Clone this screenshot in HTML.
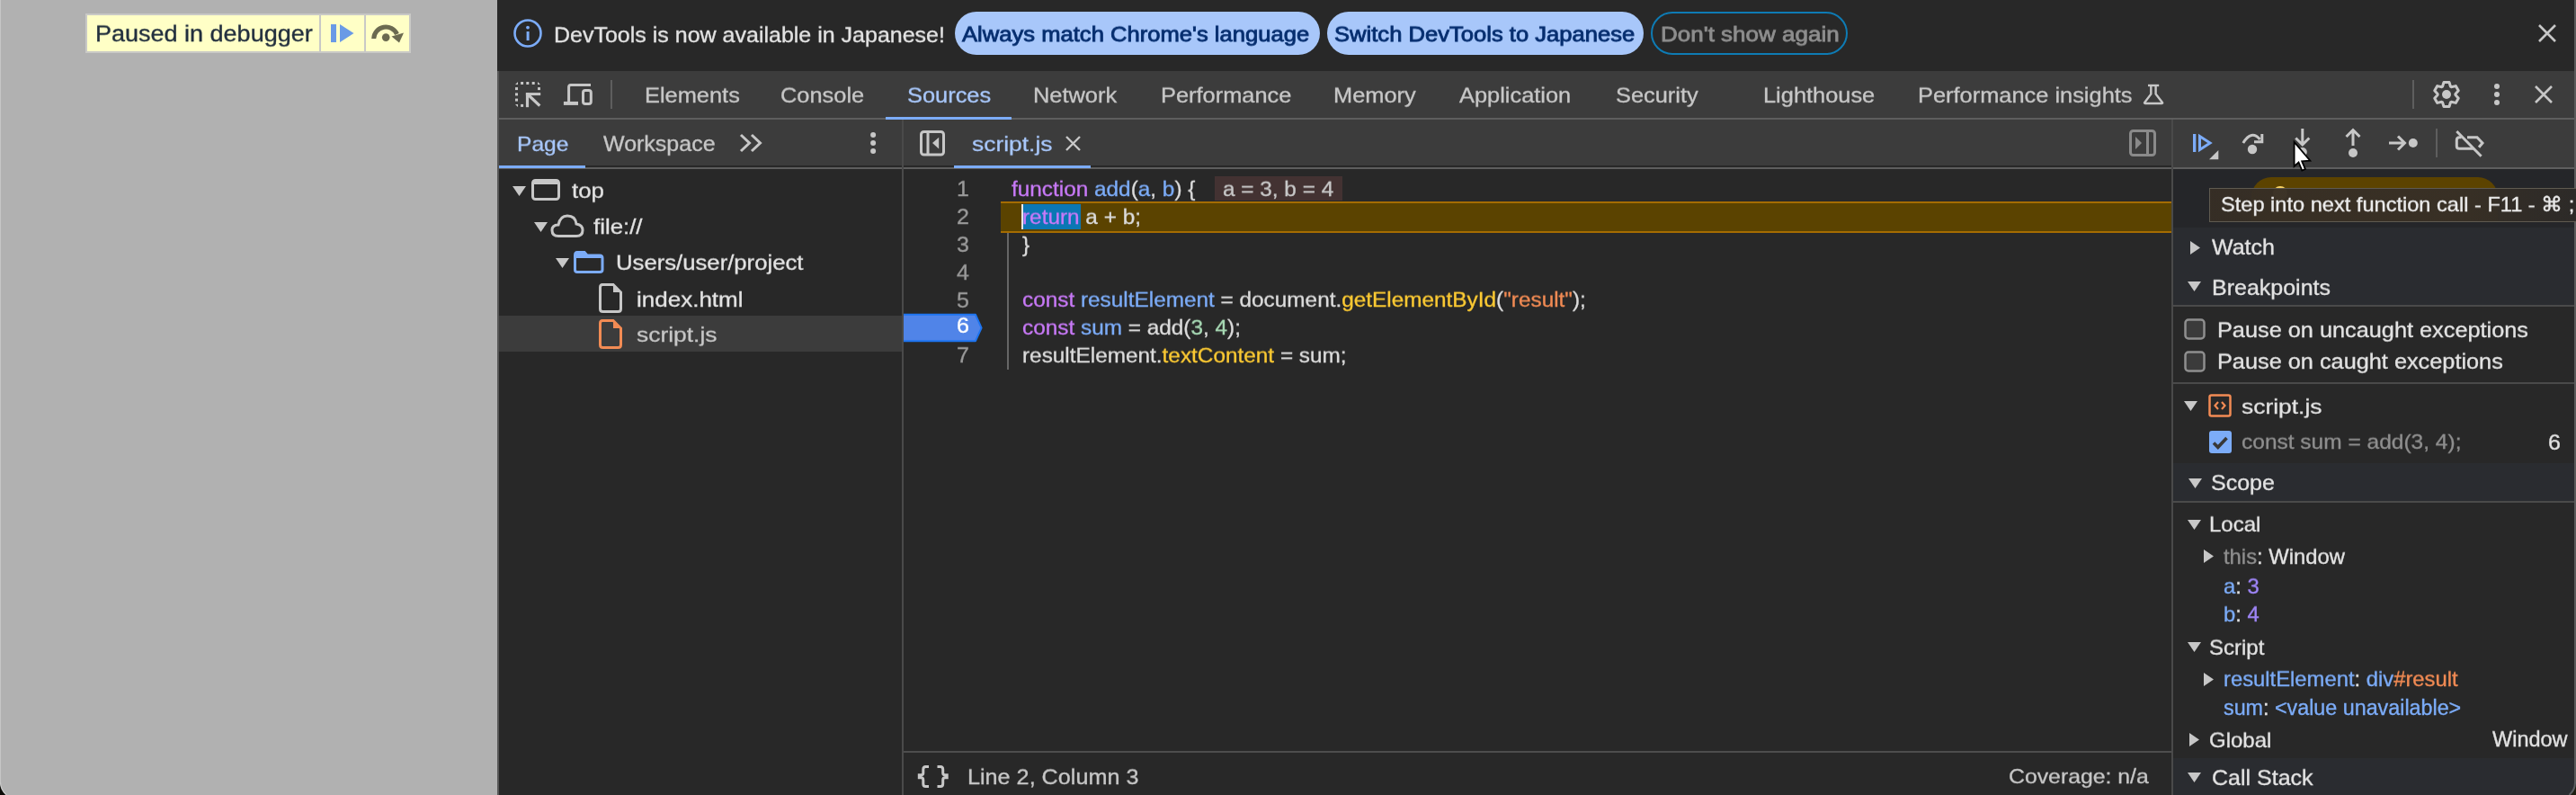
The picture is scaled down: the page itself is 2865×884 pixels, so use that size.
<!DOCTYPE html><html><head><meta charset="utf-8"><style>
html,body{margin:0;padding:0;}
body{width:2865px;height:884px;position:relative;overflow:hidden;background:#282828;font-family:"Liberation Sans",sans-serif;}
.t{position:absolute;white-space:pre;-webkit-text-stroke:0.35px currentColor;will-change:transform;}
</style></head><body>
<div style="position:absolute;left:0px;top:0px;width:553px;height:884px;background:#b1b1b1;"></div>
<div style="position:absolute;left:95px;top:15px;width:362px;height:44px;background:#ffffc6;box-sizing:border-box;border:2px solid #c9c9c6;"></div>
<div style="position:absolute;left:355px;top:17px;width:2px;height:40px;background:#c9c9c6;"></div>
<div style="position:absolute;left:405px;top:17px;width:2px;height:40px;background:#c9c9c6;"></div>
<div class="t" style="left:106px;top:24.34px;font-size:27px;line-height:27px;color:#222f3e;font-weight:400;transform:scaleY(0.925);transform-origin:0 22.86px;">Paused in debugger</div>
<svg style="position:absolute;left:360px;top:20px;" width="40" height="35" viewBox="0 0 40 35"><rect x="8" y="7" width="6" height="20" fill="#6a9ae6"/><path d="M18 7 L33.5 17 L18 27 Z" fill="#6a9ae6"/></svg>
<svg style="position:absolute;left:400px;top:15px;" width="60" height="40" viewBox="0 0 60 40"><path d="M15.7 28 A13.5 13.5 0 0 1 41.5 23" stroke="#6b6a50" stroke-width="5" fill="none"/><path d="M35.5 25.5 L49 21.5 L44 32.5 Z" fill="#6b6a50"/><circle cx="29.2" cy="26.6" r="4.3" fill="#6b6a50"/></svg>
<div style="position:absolute;left:553px;top:0px;width:2312px;height:884px;background:#282828;"></div>
<div style="position:absolute;left:553px;top:0px;width:2px;height:884px;background:#575757;"></div>
<div style="position:absolute;left:553px;top:0px;width:2312px;height:79px;background:#282828;"></div>
<svg style="position:absolute;left:570px;top:21px;" width="34" height="34" viewBox="0 0 34 34"><circle cx="17" cy="16" r="14.5" stroke="#7cacf8" stroke-width="2.6" fill="none"/><rect x="15.6" y="14" width="3" height="10" fill="#7cacf8"/><circle cx="17" cy="9.6" r="1.9" fill="#7cacf8"/></svg>
<div class="t" style="left:616px;top:25.84px;font-size:25px;line-height:25px;color:#e3e3e3;font-weight:400;transform:scaleY(0.933);transform-origin:0 21.16px;">DevTools is now available in Japanese!</div>
<div style="position:absolute;left:1062px;top:13px;width:406px;height:48px;background:#a8c7fa;border-radius:24px;"></div>
<div class="t" style="left:1070px;top:24.63px;font-size:25.6px;line-height:25.6px;color:#062e6f;font-weight:400;transform:scaleY(0.911);transform-origin:0 21.67px;-webkit-text-stroke:0.9px #062e6f;">Always match Chrome&#x27;s language</div>
<div style="position:absolute;left:1476px;top:13px;width:352px;height:48px;background:#a8c7fa;border-radius:24px;"></div>
<div class="t" style="left:1484px;top:24.63px;font-size:25.6px;line-height:25.6px;color:#062e6f;font-weight:400;transform:scaleY(0.911);transform-origin:0 21.67px;-webkit-text-stroke:0.9px #062e6f;">Switch DevTools to Japanese</div>
<div style="position:absolute;left:1836px;top:13px;width:219px;height:48px;background:transparent;box-sizing:border-box;border:2px solid #0e7bb4;border-radius:24px;"></div>
<div class="t" style="left:1847px;top:24.29px;font-size:26px;line-height:26px;color:#8e8e8e;font-weight:400;transform:scaleY(0.897);transform-origin:0 22.01px;-webkit-text-stroke:0.9px #8e8e8e;">Don&#x27;t show again</div>
<svg style="position:absolute;left:2823px;top:27px;" width="20" height="20" viewBox="0 0 20 20"><path d="M1 1 L19 19 M19 1 L1 19" stroke="#c7c7c7" stroke-width="2.6"/></svg>
<div style="position:absolute;left:555px;top:79px;width:2308px;height:52px;background:#3c3c3c;"></div>
<div style="position:absolute;left:555px;top:131px;width:2308px;height:2px;background:#5e5e5e;"></div>
<svg style="position:absolute;left:565px;top:85px;" width="100" height="40" viewBox="0 0 100 40"><g fill="#c7c7c7"><path d="M8 9 L11 6 L11 9Z M33 6 L36 9 L33 9Z M8 31 L11 31 L11 34Z"/><rect x="14.1" y="6" width="3" height="3"/><rect x="20.3" y="6" width="3" height="3"/><rect x="26.7" y="6" width="3" height="3"/><rect x="8" y="12.1" width="3" height="3"/><rect x="8" y="18.4" width="3" height="3"/><rect x="8" y="24.6" width="3" height="3"/><rect x="33" y="12.1" width="3" height="3"/><rect x="14.1" y="30.9" width="3" height="3"/><rect x="19.9" y="18.1" width="3.2" height="16.1"/><rect x="19.9" y="18.1" width="16.3" height="3"/></g><path d="M22 20 L35.3 32.6" stroke="#c7c7c7" stroke-width="3.3"/><path d="M67.6 28 V11.8 Q67.6 9.5 69.9 9.5 H92" stroke="#c7c7c7" stroke-width="3" fill="none"/><rect x="61.9" y="27.9" width="16.1" height="4" fill="#c7c7c7"/><rect x="83.5" y="15.6" width="8.8" height="14.8" rx="2.5" stroke="#c7c7c7" stroke-width="3" fill="none"/></svg>
<div style="position:absolute;left:679px;top:89px;width:2px;height:32px;background:#5e5e5e;"></div>
<div class="t" style="left:717px;top:92.70px;font-size:25.4px;line-height:25.4px;color:#c7c7c7;font-weight:400;transform:scaleY(0.918);transform-origin:0 21.50px;">Elements</div>
<div class="t" style="left:868px;top:92.70px;font-size:25.4px;line-height:25.4px;color:#c7c7c7;font-weight:400;transform:scaleY(0.918);transform-origin:0 21.50px;">Console</div>
<div class="t" style="left:1009px;top:92.70px;font-size:25.4px;line-height:25.4px;color:#a8c7fa;font-weight:400;transform:scaleY(0.918);transform-origin:0 21.50px;">Sources</div>
<div class="t" style="left:1149px;top:92.70px;font-size:25.4px;line-height:25.4px;color:#c7c7c7;font-weight:400;transform:scaleY(0.918);transform-origin:0 21.50px;">Network</div>
<div class="t" style="left:1291px;top:92.70px;font-size:25.4px;line-height:25.4px;color:#c7c7c7;font-weight:400;transform:scaleY(0.918);transform-origin:0 21.50px;">Performance</div>
<div class="t" style="left:1483px;top:92.70px;font-size:25.4px;line-height:25.4px;color:#c7c7c7;font-weight:400;transform:scaleY(0.918);transform-origin:0 21.50px;">Memory</div>
<div class="t" style="left:1623px;top:92.70px;font-size:25.4px;line-height:25.4px;color:#c7c7c7;font-weight:400;transform:scaleY(0.918);transform-origin:0 21.50px;">Application</div>
<div class="t" style="left:1797px;top:92.70px;font-size:25.4px;line-height:25.4px;color:#c7c7c7;font-weight:400;transform:scaleY(0.918);transform-origin:0 21.50px;">Security</div>
<div class="t" style="left:1961px;top:92.70px;font-size:25.4px;line-height:25.4px;color:#c7c7c7;font-weight:400;transform:scaleY(0.918);transform-origin:0 21.50px;">Lighthouse</div>
<div class="t" style="left:2133px;top:92.70px;font-size:25.4px;line-height:25.4px;color:#c7c7c7;font-weight:400;transform:scaleY(0.918);transform-origin:0 21.50px;">Performance insights</div>
<div style="position:absolute;left:985px;top:130px;width:140px;height:3px;background:#7cacf8;"></div>
<svg style="position:absolute;left:2380px;top:90px;" width="30" height="30" viewBox="0 0 30 30"><path d="M9 5 H21.2" stroke="#c7c7c7" stroke-width="2.4"/><path d="M12.3 6 V14.6 L5.2 24 Q4.6 25 5.8 25 H24.4 Q25.6 25 25 24 L17.6 14.6 V6" stroke="#c7c7c7" stroke-width="2.4" fill="none" stroke-linejoin="round"/></svg>
<div style="position:absolute;left:2683px;top:89px;width:2px;height:32px;background:#5e5e5e;"></div>
<svg style="position:absolute;left:2699px;top:85px;" width="44" height="40" viewBox="0 0 44 40"><path d="M18.99 6.43 L25.01 6.43 L26.49 11.18 L27.39 11.70 L32.25 10.61 L35.26 15.82 L31.89 19.48 L31.89 20.52 L35.26 24.18 L32.25 29.39 L27.39 28.30 L26.49 28.82 L25.01 33.57 L18.99 33.57 L17.51 28.82 L16.61 28.30 L11.75 29.39 L8.74 24.18 L12.11 20.52 L12.11 19.48 L8.74 15.82 L11.75 10.61 L16.61 11.70 L17.51 11.18 Z" stroke="#c7c7c7" stroke-width="3" fill="none" stroke-linejoin="round"/><circle cx="22" cy="20" r="5" fill="#c7c7c7"/></svg>
<svg style="position:absolute;left:2772px;top:92px;" width="10" height="26" viewBox="0 0 10 26"><circle cx="5" cy="4" r="3" fill="#c7c7c7"/><circle cx="5" cy="13" r="3" fill="#c7c7c7"/><circle cx="5" cy="22" r="3" fill="#c7c7c7"/></svg>
<svg style="position:absolute;left:2819px;top:95px;" width="20" height="20" viewBox="0 0 20 20"><path d="M1 1 L19 19 M19 1 L1 19" stroke="#c7c7c7" stroke-width="2.6"/></svg>
<div style="position:absolute;left:2863px;top:0px;width:2px;height:869px;background:#5a5a5a;"></div>
<div style="position:absolute;left:555px;top:133px;width:448px;height:51px;background:#3c3c3c;"></div>
<div style="position:absolute;left:555px;top:186px;width:448px;height:2px;background:#5e5e5e;"></div>
<div style="position:absolute;left:555px;top:184px;width:96px;height:3px;background:#7cacf8;"></div>
<div class="t" style="left:575px;top:147.78px;font-size:24.6px;line-height:24.6px;color:#a8c7fa;font-weight:400;transform:scaleY(0.948);transform-origin:0 20.82px;">Page</div>
<div class="t" style="left:671px;top:147.44px;font-size:25px;line-height:25px;color:#c7c7c7;font-weight:400;transform:scaleY(0.933);transform-origin:0 21.16px;">Workspace</div>
<svg style="position:absolute;left:820px;top:146px;" width="32" height="26" viewBox="0 0 32 26"><path d="M4 4 L13.5 13 L4 22 M16 4 L25.5 13 L16 22" stroke="#c7c7c7" stroke-width="3" fill="none"/></svg>
<svg style="position:absolute;left:966px;top:145px;" width="10" height="28" viewBox="0 0 10 28"><circle cx="5.1" cy="4.9" r="3" fill="#c7c7c7"/><circle cx="5.1" cy="14.1" r="3" fill="#c7c7c7"/><circle cx="5.1" cy="23.1" r="3" fill="#c7c7c7"/></svg>
<div style="position:absolute;left:555px;top:351px;width:448px;height:40px;background:#3c3c3c;"></div>
<svg style="position:absolute;left:570px;top:207px;" width="15" height="11" viewBox="0 0 15 11"><path d="M0 0 L15 0 L7.5 11 Z" fill="#c7c7c7"/></svg>
<svg style="position:absolute;left:591px;top:199px;" width="32" height="24" viewBox="0 0 32 24"><rect x="1.5" y="1.5" width="29" height="21" rx="3" stroke="#c7c7c7" stroke-width="3" fill="none"/><rect x="1.5" y="1.5" width="29" height="4.5" fill="#c7c7c7"/></svg>
<div class="t" style="left:635.5px;top:198.56px;font-size:25.8px;line-height:25.8px;color:#e3e3e3;font-weight:400;transform:scaleY(0.904);transform-origin:0 21.84px;">top</div>
<svg style="position:absolute;left:594px;top:247px;" width="15" height="11" viewBox="0 0 15 11"><path d="M0 0 L15 0 L7.5 11 Z" fill="#c7c7c7"/></svg>
<svg style="position:absolute;left:612px;top:238px;" width="38" height="27" viewBox="0 0 38 27"><path d="M9 24.5 Q2 24.5 2 18 Q2 12 9 12 Q11 2 19 2 Q28 2 29 11 Q36 12 36 18 Q36 24.5 29 24.5 Z" stroke="#c7c7c7" stroke-width="3" fill="none"/></svg>
<div class="t" style="left:659.5px;top:238.56px;font-size:25.8px;line-height:25.8px;color:#e3e3e3;font-weight:400;transform:scaleY(0.904);transform-origin:0 21.84px;">file://</div>
<svg style="position:absolute;left:618px;top:287px;" width="15" height="11" viewBox="0 0 15 11"><path d="M0 0 L15 0 L7.5 11 Z" fill="#c7c7c7"/></svg>
<svg style="position:absolute;left:638px;top:279px;" width="34" height="25" viewBox="0 0 34 25"><path d="M1.5 5 Q1.5 1.5 4 1.5 L12 1.5 L15 5 L29 5 Q32 5 32 8 L32 21 Q32 23.5 29 23.5 L4 23.5 Q1.5 23.5 1.5 21 Z" stroke="#7cacf8" stroke-width="3" fill="none"/><path d="M1.5 4 L1.5 8 L32 8 L32 5 L15 5 L12 1.5 L4 1.5 Z" fill="#7cacf8"/></svg>
<div class="t" style="left:684.5px;top:278.84px;font-size:25.7px;line-height:25.7px;color:#e3e3e3;font-weight:400;transform:scaleY(0.907);transform-origin:0 21.76px;">Users/user/project</div>
<svg style="position:absolute;left:666px;top:315px;" width="26" height="33" viewBox="0 0 26 33"><path d="M4 1.5 L16 1.5 L24.5 10 L24.5 28.5 Q24.5 31.5 21.5 31.5 L4.5 31.5 Q1.5 31.5 1.5 28.5 L1.5 4.5 Q1.5 1.5 4 1.5 Z" stroke="#c7c7c7" stroke-width="3" fill="none"/><path d="M16 1.5 L24.5 10 L16 10 Z" fill="#c7c7c7"/></svg>
<div class="t" style="left:708px;top:318.59px;font-size:26px;line-height:26px;color:#e3e3e3;font-weight:400;transform:scaleY(0.897);transform-origin:0 22.01px;">index.html</div>
<svg style="position:absolute;left:666px;top:355px;" width="26" height="33" viewBox="0 0 26 33"><path d="M4 1.5 L16 1.5 L24.5 10 L24.5 28.5 Q24.5 31.5 21.5 31.5 L4.5 31.5 Q1.5 31.5 1.5 28.5 L1.5 4.5 Q1.5 1.5 4 1.5 Z" stroke="#f28b54" stroke-width="3" fill="none"/><path d="M16 1.5 L24.5 10 L16 10 Z" fill="#f28b54"/></svg>
<div class="t" style="left:708px;top:358.05px;font-size:26.4px;line-height:26.4px;color:#c7c7c7;font-weight:400;transform:scaleY(0.883);transform-origin:0 22.35px;">script.js</div>
<div style="position:absolute;left:1003px;top:133px;width:2px;height:751px;background:#4a4a4a;"></div>
<div style="position:absolute;left:1005px;top:133px;width:1410px;height:51px;background:#3c3c3c;"></div>
<div style="position:absolute;left:1005px;top:186px;width:1410px;height:2px;background:#5e5e5e;"></div>
<div style="position:absolute;left:1061px;top:184px;width:152px;height:3px;background:#7cacf8;"></div>
<svg style="position:absolute;left:1022px;top:144px;" width="30" height="30" viewBox="0 0 30 30"><rect x="2.5" y="2.5" width="25" height="25.5" rx="3" stroke="#c7c7c7" stroke-width="3" fill="none"/><rect x="8.5" y="3" width="3" height="25" fill="#c7c7c7"/><path d="M22.2 8.8 L15 15 L22.2 21.6 Z" fill="#c7c7c7"/></svg>
<div class="t" style="left:1081px;top:145.85px;font-size:26.4px;line-height:26.4px;color:#a8c7fa;font-weight:400;transform:scaleY(0.883);transform-origin:0 22.35px;">script.js</div>
<svg style="position:absolute;left:1185px;top:151px;" width="17" height="17" viewBox="0 0 17 17"><path d="M1 1 L16 16 M16 1 L1 16" stroke="#c7c7c7" stroke-width="2.4"/></svg>
<svg style="position:absolute;left:2368px;top:144px;" width="30" height="30" viewBox="0 0 30 30"><rect x="1.5" y="1.5" width="27" height="27" rx="3" stroke="#8a8a8a" stroke-width="3" fill="none"/><rect x="19" y="2" width="3" height="26" fill="#8a8a8a"/><path d="M7 8 L14 15 L7 22 Z" fill="#8a8a8a"/></svg>
<div class="t" style="left:1064px;top:197.44px;font-size:25px;line-height:25px;color:#9a9a9a;font-weight:400;transform:scaleY(0.933);transform-origin:0 21.16px;">1</div>
<div class="t" style="left:1064px;top:228.24px;font-size:25px;line-height:25px;color:#9a9a9a;font-weight:400;transform:scaleY(0.933);transform-origin:0 21.16px;">2</div>
<div class="t" style="left:1064px;top:259.04px;font-size:25px;line-height:25px;color:#9a9a9a;font-weight:400;transform:scaleY(0.933);transform-origin:0 21.16px;">3</div>
<div class="t" style="left:1064px;top:289.84px;font-size:25px;line-height:25px;color:#9a9a9a;font-weight:400;transform:scaleY(0.933);transform-origin:0 21.16px;">4</div>
<div class="t" style="left:1064px;top:320.64px;font-size:25px;line-height:25px;color:#9a9a9a;font-weight:400;transform:scaleY(0.933);transform-origin:0 21.16px;">5</div>
<div class="t" style="left:1064px;top:382.24px;font-size:25px;line-height:25px;color:#9a9a9a;font-weight:400;transform:scaleY(0.933);transform-origin:0 21.16px;">7</div>
<svg style="position:absolute;left:1003px;top:348px;" width="92" height="34" viewBox="0 0 92 34"><path d="M0 1.8 L82 1.8 L88.6 16.6 L82 31.2 L0 31.2 Z" fill="#5084e8" stroke="#1d74f0" stroke-width="2" stroke-linejoin="round"/></svg>
<div style="position:absolute;left:1003px;top:346px;width:2px;height:38px;background:#4a4a4a;"></div>
<div class="t" style="left:1064px;top:349.44px;font-size:25px;line-height:25px;color:#ffffff;font-weight:400;transform:scaleY(0.933);transform-origin:0 21.16px;">6</div>
<div style="position:absolute;left:1351px;top:196px;width:142px;height:27px;background:#433232;"></div>
<div class="t" style="left:1360px;top:197.99px;font-size:24.35px;line-height:24.35px;color:#c7c7c7;font-weight:400;transform:scaleY(0.958);transform-origin:0 20.61px;">a = 3, b = 4</div>
<div style="position:absolute;left:1113px;top:224px;width:1302px;height:35px;background:#5b4300;box-sizing:border-box;border-top:2px solid #a56c00;border-bottom:2px solid #a56c00;"></div>
<div style="position:absolute;left:1138px;top:227px;width:64px;height:28px;background:#0b77b4;"></div>
<div style="position:absolute;left:1136px;top:227px;width:2px;height:28px;background:#e8e8e8;"></div>
<div style="position:absolute;left:1120px;top:259px;width:2px;height:152px;background:#666666;"></div>
<div class="t" style="left:1125px;top:197.99px;font-size:24.35px;line-height:24.35px;color:#dcdcdc;font-weight:400;transform:scaleY(0.958);transform-origin:0 20.61px;"><span style="color:#c97af8">function</span><span style="color:#dcdcdc"> </span><span style="color:#7cacf8">add</span><span style="color:#dcdcdc">(</span><span style="color:#7cacf8">a</span><span style="color:#dcdcdc">, </span><span style="color:#7cacf8">b</span><span style="color:#dcdcdc">) {</span></div>
<div class="t" style="left:1137px;top:228.79px;font-size:24.35px;line-height:24.35px;color:#dcdcdc;font-weight:400;transform:scaleY(0.958);transform-origin:0 20.61px;"><span style="color:#c97af8">return</span><span style="color:#dcdcdc"> a + b;</span></div>
<div class="t" style="left:1137px;top:259.59px;font-size:24.35px;line-height:24.35px;color:#dcdcdc;font-weight:400;transform:scaleY(0.958);transform-origin:0 20.61px;"><span style="color:#dcdcdc">}</span></div>
<div class="t" style="left:1137px;top:321.19px;font-size:24.35px;line-height:24.35px;color:#dcdcdc;font-weight:400;transform:scaleY(0.958);transform-origin:0 20.61px;"><span style="color:#c97af8">const</span><span style="color:#dcdcdc"> </span><span style="color:#7cacf8">resultElement</span><span style="color:#dcdcdc"> = document.</span><span style="color:#fbc933">getElementById</span><span style="color:#dcdcdc">(</span><span style="color:#f28b54">&quot;result&quot;</span><span style="color:#dcdcdc">);</span></div>
<div class="t" style="left:1137px;top:351.99px;font-size:24.35px;line-height:24.35px;color:#dcdcdc;font-weight:400;transform:scaleY(0.958);transform-origin:0 20.61px;"><span style="color:#c97af8">const</span><span style="color:#dcdcdc"> </span><span style="color:#7cacf8">sum</span><span style="color:#dcdcdc"> = add(</span><span style="color:#a8dab5">3</span><span style="color:#dcdcdc">, </span><span style="color:#a8dab5">4</span><span style="color:#dcdcdc">);</span></div>
<div class="t" style="left:1137px;top:382.79px;font-size:24.35px;line-height:24.35px;color:#dcdcdc;font-weight:400;transform:scaleY(0.958);transform-origin:0 20.61px;"><span style="color:#dcdcdc">resultElement.</span><span style="color:#fbc933">textContent</span><span style="color:#dcdcdc"> = sum;</span></div>
<div style="position:absolute;left:1005px;top:835px;width:1410px;height:2px;background:#4d4d4d;"></div>
<svg style="position:absolute;left:1018px;top:848px;" width="40" height="30" viewBox="0 0 40 30"><path d="M15 4.5 H11.5 Q8.8 4.5 8.8 7.5 V11.5 Q8.8 13.8 6.5 13.8 H4.3 V16.8 H6.5 Q8.8 16.8 8.8 19.5 V23.5 Q8.8 26.5 11.5 26.5 H15 M24.5 4.5 H28 Q30.7 4.5 30.7 7.5 V11.5 Q30.7 13.8 33 13.8 H35.2 V16.8 H33 Q30.7 16.8 30.7 19.5 V23.5 Q30.7 26.5 28 26.5 H24.5" stroke="#c7c7c7" stroke-width="3" fill="none"/></svg>
<div class="t" style="left:1076px;top:850.87px;font-size:25.2px;line-height:25.2px;color:#c7c7c7;font-weight:400;transform:scaleY(0.925);transform-origin:0 21.33px;">Line 2, Column 3</div>
<div class="t" style="left:2233.6px;top:851.01px;font-size:24.8px;line-height:24.8px;color:#c7c7c7;font-weight:400;transform:scaleY(0.940);transform-origin:0 20.99px;">Coverage: n/a</div>
<div style="position:absolute;left:2415px;top:133px;width:2px;height:751px;background:#4a4a4a;"></div>
<div style="position:absolute;left:2417px;top:133px;width:446px;height:53px;background:#3c3c3c;"></div>
<div style="position:absolute;left:2417px;top:186px;width:446px;height:2px;background:#5e5e5e;"></div>
<svg style="position:absolute;left:2430px;top:140px;" width="40" height="40" viewBox="0 0 40 40"><rect x="9" y="9" width="3.3" height="20" fill="#7cacf8"/><path d="M16.5 11.6 L28 19 L16.5 26.4 Z" stroke="#7cacf8" stroke-width="3" fill="none"/><path d="M27 37.3 L37.3 37.3 L37.3 27 Z" fill="#c7c7c7"/></svg>
<svg style="position:absolute;left:2490px;top:145px;" width="30" height="30" viewBox="0 0 30 30"><path d="M4.8 14 Q 14 -1 23.5 10" stroke="#c7c7c7" stroke-width="3" fill="none"/><path d="M17 12.7 L25.8 12.7 L25.8 4" stroke="#c7c7c7" stroke-width="3" fill="none"/><circle cx="15" cy="21" r="5.2" fill="#c7c7c7"/></svg>
<svg style="position:absolute;left:2550px;top:140px;" width="22" height="40" viewBox="0 0 22 40"><path d="M10.8 3 L10.8 20 M3.3 13.5 L10.8 21 L18.3 13.5" stroke="#c7c7c7" stroke-width="3" fill="none"/><circle cx="10.8" cy="29" r="5" fill="#c7c7c7"/></svg>
<svg style="position:absolute;left:2600px;top:140px;" width="34" height="40" viewBox="0 0 34 40"><path d="M17 22 L17 5 M9.5 12 L17 4.5 L24.5 12" stroke="#c7c7c7" stroke-width="3" fill="none"/><circle cx="17" cy="30" r="5" fill="#c7c7c7"/></svg>
<svg style="position:absolute;left:2650px;top:145px;" width="44" height="30" viewBox="0 0 44 30"><path d="M7 14 L24 14 M17 6.5 L24.5 14 L17 21.5" stroke="#c7c7c7" stroke-width="3" fill="none"/><circle cx="33.8" cy="14" r="5" fill="#c7c7c7"/></svg>
<div style="position:absolute;left:2709px;top:143px;width:2px;height:32px;background:#5e5e5e;"></div>
<svg style="position:absolute;left:2728px;top:143px;" width="38" height="34" viewBox="0 0 38 34"><path d="M9.5 9.7 L7.3 9.7 Q4.3 9.7 4.3 12.7 L4.3 19.5 Q4.3 22.3 7.3 22.3 L22.8 22.3 M16 9.7 L27 9.7 L33 16 L29 20.8" stroke="#c7c7c7" stroke-width="3" fill="none"/><path d="M4.3 3 L31.6 30.7" stroke="#c7c7c7" stroke-width="3"/></svg>
<div style="position:absolute;left:2417px;top:188px;width:446px;height:65px;background:#252629;"></div>
<div style="position:absolute;left:2504px;top:197px;width:274px;height:50px;background:#5c4300;border-radius:22px 22px 0 0;"></div>
<svg style="position:absolute;left:2526px;top:205px;" width="20" height="20" viewBox="0 0 20 20"><circle cx="10" cy="10" r="8" fill="#fdd663"/></svg>
<div style="position:absolute;left:2417px;top:253px;width:446px;height:86px;background:#2a2c30;"></div>
<div style="position:absolute;left:2417px;top:339px;width:446px;height:2px;background:#4a4a4a;"></div>
<svg style="position:absolute;left:2435.5px;top:268px;" width="11" height="15" viewBox="0 0 11 15"><path d="M0 0 L11 7.5 L0 15 Z" fill="#c7c7c7"/></svg>
<div class="t" style="left:2460px;top:262.44px;font-size:25px;line-height:25px;color:#e3e3e3;font-weight:400;transform:scaleY(0.933);transform-origin:0 21.16px;">Watch</div>
<svg style="position:absolute;left:2433px;top:313px;" width="15" height="11" viewBox="0 0 15 11"><path d="M0 0 L15 0 L7.5 11 Z" fill="#c7c7c7"/></svg>
<div class="t" style="left:2460px;top:306.54px;font-size:25px;line-height:25px;color:#e3e3e3;font-weight:400;transform:scaleY(0.933);transform-origin:0 21.16px;">Breakpoints</div>
<svg style="position:absolute;left:2429px;top:354px;" width="24" height="24" viewBox="0 0 24 24"><rect x="1.5" y="1.5" width="21" height="21" rx="3.5" stroke="#8f8f8f" stroke-width="2.5" fill="#3b3b3b"/></svg>
<div class="t" style="left:2466px;top:353.78px;font-size:25.3px;line-height:25.3px;color:#e3e3e3;font-weight:400;transform:scaleY(0.922);transform-origin:0 21.42px;">Pause on uncaught exceptions</div>
<svg style="position:absolute;left:2429px;top:390px;" width="24" height="24" viewBox="0 0 24 24"><rect x="1.5" y="1.5" width="21" height="21" rx="3.5" stroke="#8f8f8f" stroke-width="2.5" fill="#3b3b3b"/></svg>
<div class="t" style="left:2466px;top:389.28px;font-size:25.3px;line-height:25.3px;color:#e3e3e3;font-weight:400;transform:scaleY(0.922);transform-origin:0 21.42px;">Pause on caught exceptions</div>
<div style="position:absolute;left:2417px;top:425px;width:446px;height:2px;background:#4a4a4a;"></div>
<svg style="position:absolute;left:2429px;top:446px;" width="15" height="11" viewBox="0 0 15 11"><path d="M0 0 L15 0 L7.5 11 Z" fill="#c7c7c7"/></svg>
<svg style="position:absolute;left:2456px;top:438px;" width="26" height="26" viewBox="0 0 26 26"><rect x="1.5" y="1.5" width="23" height="23" rx="2" stroke="#f28b54" stroke-width="2.5" fill="none"/><path d="M11 9 L7.5 13 L11 17 M15 9 L18.5 13 L15 17" stroke="#f28b54" stroke-width="2.2" fill="none"/></svg>
<div class="t" style="left:2493px;top:438.35px;font-size:26.4px;line-height:26.4px;color:#e3e3e3;font-weight:400;transform:scaleY(0.883);transform-origin:0 22.35px;">script.js</div>
<svg style="position:absolute;left:2457px;top:479px;" width="25" height="25" viewBox="0 0 25 25"><rect x="0" y="0" width="25" height="25" rx="3" fill="#7cacf8"/><path d="M5 13.5 L9.8 18.3 L19.5 8" stroke="#383838" stroke-width="3.6" fill="none"/></svg>
<div class="t" style="left:2493px;top:478.96px;font-size:24.5px;line-height:24.5px;color:#8f8f8f;font-weight:400;transform:scaleY(0.952);transform-origin:0 20.74px;">const sum = add(3, 4);</div>
<div class="t" style="right:17px;top:478.54px;font-size:25px;line-height:25px;color:#e3e3e3;font-weight:400;transform:scaleY(0.933);transform-origin:0 21.16px;">6</div>
<div style="position:absolute;left:2417px;top:515px;width:446px;height:43px;background:#2a2c30;"></div>
<div style="position:absolute;left:2417px;top:557px;width:446px;height:2px;background:#4a4a4a;"></div>
<svg style="position:absolute;left:2433.5px;top:532px;" width="15" height="11" viewBox="0 0 15 11"><path d="M0 0 L15 0 L7.5 11 Z" fill="#c7c7c7"/></svg>
<div class="t" style="left:2459px;top:524.34px;font-size:25px;line-height:25px;color:#e3e3e3;font-weight:400;transform:scaleY(0.933);transform-origin:0 21.16px;">Scope</div>
<svg style="position:absolute;left:2433px;top:578px;" width="15" height="11" viewBox="0 0 15 11"><path d="M0 0 L15 0 L7.5 11 Z" fill="#c7c7c7"/></svg>
<div class="t" style="left:2457px;top:571.38px;font-size:24px;line-height:24px;color:#e3e3e3;font-weight:400;transform:scaleY(0.972);transform-origin:0 20.32px;">Local</div>
<svg style="position:absolute;left:2451px;top:611px;" width="11" height="15" viewBox="0 0 11 15"><path d="M0 0 L11 7.5 L0 15 Z" fill="#c7c7c7"/></svg>
<div class="t" style="left:2473px;top:607.05px;font-size:23.8px;line-height:23.8px;color:#e3e3e3;font-weight:400;transform:scaleY(0.980);transform-origin:0 20.15px;"><span style="color:#8f8f8f">this</span>: Window</div>
<div class="t" style="left:2473px;top:639.55px;font-size:23.8px;line-height:23.8px;color:#e3e3e3;font-weight:400;transform:scaleY(0.980);transform-origin:0 20.15px;"><span style="color:#7cacf8">a</span>: <span style="color:#9f86f7">3</span></div>
<div class="t" style="left:2473px;top:671.35px;font-size:23.8px;line-height:23.8px;color:#e3e3e3;font-weight:400;transform:scaleY(0.980);transform-origin:0 20.15px;"><span style="color:#7cacf8">b</span>: <span style="color:#9f86f7">4</span></div>
<svg style="position:absolute;left:2433px;top:714px;" width="15" height="11" viewBox="0 0 15 11"><path d="M0 0 L15 0 L7.5 11 Z" fill="#c7c7c7"/></svg>
<div class="t" style="left:2457px;top:707.88px;font-size:24px;line-height:24px;color:#e3e3e3;font-weight:400;transform:scaleY(0.972);transform-origin:0 20.32px;">Script</div>
<svg style="position:absolute;left:2451px;top:748px;" width="11" height="15" viewBox="0 0 11 15"><path d="M0 0 L11 7.5 L0 15 Z" fill="#c7c7c7"/></svg>
<div class="t" style="left:2473px;top:743.05px;font-size:23.8px;line-height:23.8px;color:#e3e3e3;font-weight:400;transform:scaleY(0.980);transform-origin:0 20.15px;"><span style="color:#7cacf8">resultElement</span>: <span style="color:#7cacf8">div</span><span style="color:#f28b54">#result</span></div>
<div class="t" style="left:2473px;top:775.98px;font-size:23.3px;line-height:23.3px;color:#e3e3e3;font-weight:400;"><span style="color:#7cacf8">sum</span>: <span style="color:#7cacf8">&lt;value unavailable&gt;</span></div>
<svg style="position:absolute;left:2435px;top:815px;" width="11" height="15" viewBox="0 0 11 15"><path d="M0 0 L11 7.5 L0 15 Z" fill="#c7c7c7"/></svg>
<div class="t" style="left:2457px;top:810.88px;font-size:24px;line-height:24px;color:#e3e3e3;font-weight:400;transform:scaleY(0.972);transform-origin:0 20.32px;">Global</div>
<div class="t" style="right:9px;top:811.31px;font-size:23.5px;line-height:23.5px;color:#e3e3e3;font-weight:400;transform:scaleY(0.992);transform-origin:0 19.89px;">Window</div>
<div style="position:absolute;left:2417px;top:843px;width:446px;height:41px;background:#2a2c30;"></div>
<svg style="position:absolute;left:2433px;top:859px;" width="15" height="11" viewBox="0 0 15 11"><path d="M0 0 L15 0 L7.5 11 Z" fill="#c7c7c7"/></svg>
<div class="t" style="left:2460px;top:851.54px;font-size:25px;line-height:25px;color:#e3e3e3;font-weight:400;transform:scaleY(0.933);transform-origin:0 21.16px;">Call Stack</div>
<div style="position:absolute;left:2457px;top:209px;width:420px;height:38px;background:linear-gradient(90deg,rgba(54,46,37,0.97) 0%,rgba(55,47,38,0.97) 65%,rgba(44,42,40,0.97) 100%);box-sizing:border-box;border:1px solid #5f5a50;"></div>
<div class="t" style="left:2470px;top:216.42px;font-size:23.6px;line-height:23.6px;color:#ececec;font-weight:400;transform:scaleY(0.942);transform-origin:0 19.98px;">Step into next function call - F11 - ⌘ ;</div>
<svg style="position:absolute;left:2545px;top:150px;" width="30" height="45" viewBox="0 0 30 45"><path d="M6.6 8 L6.6 35 L11.5 30.5 L15.3 39.6 L18.9 38.1 L15.2 29.2 L24.3 28.6 Z" fill="#fff" stroke="#000" stroke-width="1.8" stroke-linejoin="miter"/></svg>
<svg style="position:absolute;left:0px;top:849px;" width="30" height="35" viewBox="0 0 30 35"><path d="M0 20 A20 20 0 0 0 6.77 35 L0 35 Z" fill="#0c0c08"/><path d="M0.5 20 A19.5 19.5 0 0 0 7.2 35" stroke="#c9c9c9" stroke-width="1.2" fill="none"/></svg>
<div style="position:absolute;left:0px;top:0px;width:1px;height:870px;background:#c6c6c6;"></div>
<svg style="position:absolute;left:2835px;top:849px;" width="30" height="35" viewBox="0 0 30 35"><path d="M30 20 A20 20 0 0 1 23.23 35 L30 35 Z" fill="#1e1e10"/><path d="M29 20 A19 19 0 0 1 22.5 35" stroke="#5a5d60" stroke-width="2" fill="none"/></svg>
</body></html>
